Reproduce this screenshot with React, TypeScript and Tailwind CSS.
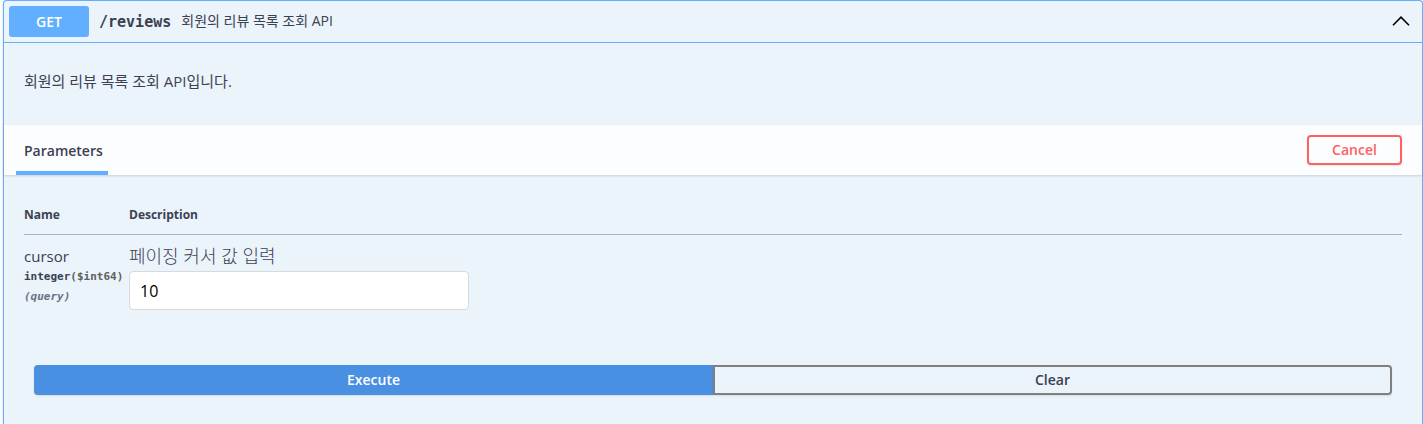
import { useState } from 'react';

export default function App() {
  const [open, setOpen] = useState(true);
  const [cursor, setCursor] = useState('10');

  return (
    <main className="overflow-hidden bg-white pl-[3px] font-['Open_Sans','Noto_Sans_CJK_KR',sans-serif] text-[#3b4151]">
      <section className="min-h-screen rounded-t border border-b-0 border-[#61affe] bg-[#ebf3fb] shadow-[0_0_3px_rgba(0,0,0,0.19)]">
        <header className="flex items-center border-b border-[#61affe] p-[5px]">
          <span className="w-20 rounded-[3px] bg-[#61affe] text-center text-sm leading-[31px] font-semibold text-white">
            GET
          </span>
          <h1 className="pl-[10px] font-['DejaVu_Sans_Mono',monospace] text-[15px] leading-5 font-bold">/reviews</h1>
          <p className="flex-1 px-[10px] pb-[2px] text-sm leading-5">회원의 리뷰 목록 조회 API</p>
          <button
            type="button"
            aria-label="Toggle operation"
            aria-expanded={open}
            onClick={() => setOpen(!open)}
            className="mr-[6px] pb-[2px] text-black"
          >
            <svg width="20" height="20" viewBox="0 0 20 20" fill="none" stroke="currentColor" strokeWidth="1.6">
              <path d="M2 14.2 L10 6.2 L18 14.2" />
            </svg>
          </button>
        </header>

        {open && (
          <div>
            <p className="px-5 pt-[27px] pb-[33px] text-[15px] leading-[22px]">회원의 리뷰 목록 조회 API입니다.</p>

            <div className="flex h-[50px] items-center justify-between bg-[#fcfdfe] pr-5 pl-3 shadow-[0_1px_2px_rgba(0,0,0,0.15)]">
              <h2 className="flex h-full items-center border-b-4 border-[#61affe] pt-[6px] pr-[5px] pl-2 text-sm font-semibold">
                Parameters
              </h2>
              <button
                type="button"
                className="h-[30px] w-[95px] rounded border-2 border-[#ff6060] text-sm leading-5 font-semibold text-[#ff6060] shadow-[0_1px_2px_rgba(0,0,0,0.1)]"
              >
                Cancel
              </button>
            </div>

            <div className="px-5 pt-[30px]">
              <table className="w-full border-collapse text-left">
                <thead>
                  <tr className="border-b border-[#a8b1bf] text-xs leading-5">
                    <th className="w-[105px] pb-[9px] font-bold">Name</th>
                    <th className="pb-[9px] font-bold">Description</th>
                  </tr>
                </thead>
                <tbody>
                  <tr className="align-top">
                    <td className="pt-[10px]">
                      <label htmlFor="cursor" className="block text-[15px] leading-[22px]">
                        cursor
                      </label>
                      <div className="font-['DejaVu_Sans_Mono',monospace] text-[11px] leading-5 font-bold">
                        integer<span className="text-[#606060]">($int64)</span>
                      </div>
                      <div className="font-['DejaVu_Sans_Mono',monospace] text-[11px] leading-5 font-bold text-gray-500 italic">
                        (query)
                      </div>
                    </td>
                    <td className="pt-[10px]">
                      <p className="text-lg leading-[22px] font-light">페이징 커서 값 입력</p>
                      <input
                        id="cursor"
                        type="text"
                        value={cursor}
                        onChange={(event) => setCursor(event.target.value)}
                        className="mt-1 block h-[39px] w-[340px] rounded border border-[#d9d9d9] bg-white px-[10px] text-base text-black"
                      />
                    </td>
                  </tr>
                </tbody>
              </table>
            </div>

            <div className="flex px-[30px] pt-[55px] pb-[29px] text-sm leading-[26px] font-semibold">
              <button
                type="button"
                className="flex-1 rounded-l border-2 border-[#4990e2] bg-[#4990e2] text-white shadow-[0_1px_2px_rgba(0,0,0,0.1)]"
              >
                Execute
              </button>
              <button
                type="button"
                onClick={() => setCursor('')}
                className="flex-1 rounded-r border-2 border-[#808080] shadow-[0_1px_2px_rgba(0,0,0,0.1)]"
              >
                Clear
              </button>
            </div>
          </div>
        )}
      </section>
    </main>
  );
}
